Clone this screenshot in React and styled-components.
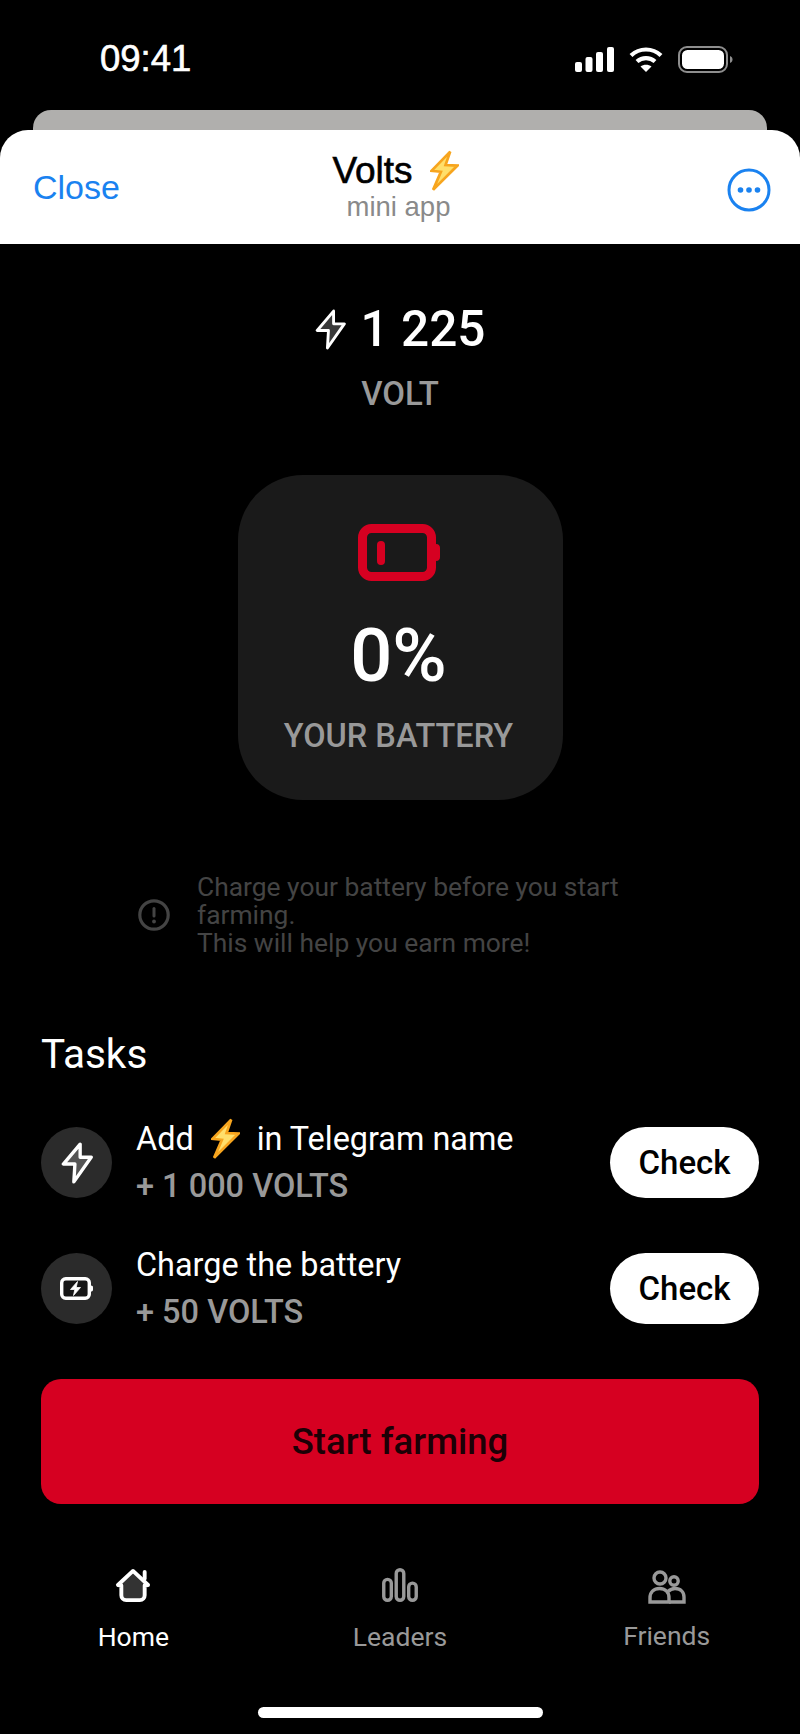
import React from 'react';
import styled, { createGlobalStyle } from 'styled-components';

const GlobalStyle = createGlobalStyle`
  html, body {
    margin: 0;
    padding: 0;
    background: #000;
  }
  * {
    box-sizing: border-box;
  }
`;

const BoltEmoji = ({ size = 28 }) => (
  <EmojiSvg $size={size} viewBox="0 0 28 40">
    <path d="M19.5 1.5 L1.5 20 L10.5 21 L3 38.5 L26.5 15 L15 14.5 Z" fill="#ffdf6b" stroke="#f7a51e" strokeWidth="2.6" strokeLinejoin="miter" />
  </EmojiSvg>
);

const BoltOutline = ({ width, height, fill = 'none', weight = 2.8 }) => (
  <svg width={width} height={height} viewBox="0 0 30 40">
    <path d="M18 2 L2 21 L13 21 L12 38 L28.5 14.5 L18 14.5 Z" fill={fill} stroke="#fff" strokeWidth={weight} strokeLinejoin="round" />
  </svg>
);

const App = () => {
  return (
    <Page>
      <GlobalStyle />
      <StatusBar>
        <Time>09:41</Time>
        <StatusIcons>
          <svg width="39" height="25" viewBox="0 0 39 25" fill="#fff">
            <rect x="0" y="15" width="7" height="10" rx="2" />
            <rect x="10.5" y="10" width="7" height="15" rx="2" />
            <rect x="21" y="5" width="7" height="20" rx="2" />
            <rect x="32" y="0" width="7" height="25" rx="2" />
          </svg>
          <svg width="34" height="25" viewBox="0 0 34 25" fill="none" stroke="#fff" strokeWidth="4.2">
            <path d="M2 8.5 C10.5 0.5 23.5 0.5 32 8.5" />
            <path d="M8 14.5 C13 10 21 10 26 14.5" />
            <path d="M17 25 L11.5 19.5 C14.5 17 19.5 17 22.5 19.5 Z" fill="#fff" stroke="none" />
          </svg>
          <svg width="55" height="27" viewBox="0 0 55 27">
            <rect x="1" y="1" width="48" height="25" rx="8" fill="none" stroke="#8e8e8e" strokeWidth="2" />
            <rect x="4" y="4" width="42" height="19" rx="5.5" fill="#fff" />
            <path d="M52 10 C54 11 54.5 12 54.5 13.5 C54.5 15 54 16 52 17 Z" fill="#8e8e8e" />
          </svg>
        </StatusIcons>
      </StatusBar>

      <BackSheet />
      <Header>
        <CloseLink>Close</CloseLink>
        <HeaderTitle>
          <AppName>
            Volts <BoltEmoji size={29} />
          </AppName>
          <AppSub>mini app</AppSub>
        </HeaderTitle>
        <MoreBtn>
          <svg width="44" height="44" viewBox="0 0 44 44">
            <circle cx="22" cy="22" r="20" fill="none" stroke="#1a82f0" strokeWidth="3" />
            <circle cx="13.5" cy="22" r="2.8" fill="#1a82f0" />
            <circle cx="22" cy="22" r="2.8" fill="#1a82f0" />
            <circle cx="30.5" cy="22" r="2.8" fill="#1a82f0" />
          </svg>
        </MoreBtn>
      </Header>

      <Balance>
        <BalanceRow>
          <BoltOutline width={31} height={41} fill="#3a3a3a" />
          <BalanceValue>1 225</BalanceValue>
        </BalanceRow>
        <BalanceUnit>VOLT</BalanceUnit>
      </Balance>

      <BatteryCard>
        <svg width="82" height="57" viewBox="0 0 82 57">
          <rect x="4.5" y="4.5" width="69" height="48" rx="9" fill="none" stroke="#d60021" strokeWidth="9" />
          <rect x="19" y="17" width="8" height="24" rx="4" fill="#d60021" />
          <path d="M78 20 C81 20 82 22 82 24 L82 33 C82 35 81 37 78 37 Z" fill="#d60021" />
        </svg>
        <BatteryValue>0%</BatteryValue>
        <BatteryLabel>YOUR BATTERY</BatteryLabel>
      </BatteryCard>

      <Notice>
        <svg width="32" height="32" viewBox="0 0 32 32">
          <circle cx="16" cy="16" r="14.2" fill="none" stroke="#444" strokeWidth="3.2" />
          <rect x="14.5" y="8" width="3" height="10.5" rx="1.5" fill="#444" />
          <circle cx="16" cy="22.5" r="1.9" fill="#444" />
        </svg>
        <NoticeText>
          Charge your battery before you start farming.
          <br />
          This will help you earn more!
        </NoticeText>
      </Notice>

      <TasksTitle>Tasks</TasksTitle>
      <TaskList>
        <TaskRow>
          <TaskIcon>
            <BoltOutline width={32} height={42} fill="#555" weight={3.2} />
          </TaskIcon>
          <TaskBody>
            <TaskName>
              Add <BoltEmoji size={29} /> in Telegram name
            </TaskName>
            <TaskReward>+ 1 000 VOLTS</TaskReward>
          </TaskBody>
          <CheckBtn>Check</CheckBtn>
        </TaskRow>
        <TaskRow>
          <TaskIcon>
            <svg width="33" height="23" viewBox="0 0 33 23">
              <rect x="1.7" y="1.7" width="27.6" height="19.6" rx="4" fill="#161616" stroke="#fff" strokeWidth="3.4" />
              <path d="M17.5 4.5 L10.5 12.5 L14.8 12.5 L13.5 18.5 L20.5 10.5 L16.2 10.5 Z" fill="#fff" stroke="#fff" strokeWidth="0.8" strokeLinejoin="round" />
              <path d="M31 8.5 C32.2 8.5 33 9.3 33 10.3 L33 12.7 C33 13.7 32.2 14.5 31 14.5 Z" fill="#fff" />
            </svg>
          </TaskIcon>
          <TaskBody>
            <TaskName>Charge the battery</TaskName>
            <TaskReward>+ 50 VOLTS</TaskReward>
          </TaskBody>
          <CheckBtn>Check</CheckBtn>
        </TaskRow>
      </TaskList>

      <StartBtn>Start farming</StartBtn>

      <TabBar>
        <Tab $active>
          <svg width="38" height="36" viewBox="0 0 38 36">
            <path d="M19 3 L3.5 17.5 L7 18 L7 28 C7 31 9 33 12 33 L26 33 C29 33 31 31 31 28 L31 18 L34.5 17.5 Z" fill="#333" stroke="#fff" strokeWidth="4" strokeLinejoin="round" />
            <rect x="29" y="2" width="4" height="11" rx="2" fill="#fff" />
          </svg>
          <TabLabel>Home</TabLabel>
        </Tab>
        <Tab>
          <svg width="38" height="36" viewBox="0 0 38 36" fill="none" stroke="#999" strokeWidth="3.6">
            <rect x="1.8" y="12" width="8" height="22.2" rx="4" />
            <rect x="15" y="1.8" width="8" height="32.4" rx="4" />
            <rect x="28.2" y="16" width="8" height="18.2" rx="4" />
          </svg>
          <TabLabel $shift={1}>Leaders</TabLabel>
        </Tab>
        <Tab>
          <svg width="38" height="36" viewBox="0 -2 38 36" fill="none" stroke="#999" strokeWidth="3.4">
            <circle cx="12" cy="8" r="6" />
            <circle cx="26" cy="11" r="4.2" />
            <path d="M2 32 L2 28 C2 22 6 18.5 11.5 18.5 C17 18.5 21 22 21 28 L21 32 Z" />
            <path d="M20 21.5 C22 19.5 24.5 18.5 27 18.5 C32.5 18.5 36 22 36 27 L36 32 L21 32" />
          </svg>
          <TabLabel $shift={-2}>Friends</TabLabel>
        </Tab>
      </TabBar>

      <HomeIndicator />
    </Page>
  );
};

const Page = styled.div`
  width: 800px;
  height: 1734px;
  background: #000;
  overflow: hidden;
  font-family: Roboto, "Liberation Sans", sans-serif;
  color: #fff;
`;
const StatusBar = styled.div`
  height: 110px;
  padding: 44px 67px 0 100px;
  display: flex;
  justify-content: space-between;
  align-items: flex-start;
`;
const Time = styled.div`
  font-family: "Liberation Sans", sans-serif;
  font-size: 36.5px;
  line-height: 30px;
  font-weight: 400;
  -webkit-text-stroke: 0.6px #fff;
`;
const StatusIcons = styled.div`
  display: flex;
  align-items: center;
  gap: 15px;
  margin-top: 2px;
`;
const BackSheet = styled.div`
  height: 20px;
  margin: 0 33px;
  background: #b0afad;
  border-radius: 18px 18px 0 0;
`;
const Header = styled.div`
  height: 114px;
  background: #fff;
  border-radius: 28px 28px 0 0;
  padding: 0 29px 0 33px;
  display: grid;
  grid-template-columns: 1fr auto 1fr;
  align-items: center;
  font-family: "Liberation Sans", sans-serif;
`;
const CloseLink = styled.div`
  font-size: 34px;
  color: #1a82f0;
  margin-top: 1px;
`;
const HeaderTitle = styled.div`
  display: flex;
  flex-direction: column;
  align-items: center;
  margin-top: -2px;
  margin-right: 7px;
`;
const AppName = styled.div`
  font-size: 37px;
  line-height: 40px;
  color: #000;
  -webkit-text-stroke: 0.6px #000;
  display: flex;
  align-items: center;
  gap: 17px;
  margin-left: -6px;
`;
const EmojiSvg = styled.svg`
  display: inline-block;
  width: ${(p) => p.$size}px;
  height: ${(p) => p.$size * 1.43}px;
  flex: none;
`;
const AppSub = styled.div`
  font-size: 27.5px;
  line-height: 30px;
  color: #8a8a8a;
`;
const MoreBtn = styled.div`
  display: flex;
  justify-content: flex-end;
  margin-top: 5px;
`;
const Balance = styled.div`
  margin-top: 60px;
  display: flex;
  flex-direction: column;
  align-items: center;
`;
const BalanceRow = styled.div`
  display: flex;
  align-items: center;
  gap: 15px;
  height: 50px;
`;
const BalanceValue = styled.div`
  font-size: 49.5px;
  font-weight: 500;
  line-height: 50px;
`;
const BalanceUnit = styled.div`
  margin-top: 22px;
  font-size: 33px;
  line-height: 36px;
  font-weight: 500;
  color: #999;
`;
const BatteryCard = styled.div`
  width: 325px;
  height: 325px;
  margin: 63px auto 0;
  background: #1a1a1a;
  border-radius: 65px;
  padding: 49px 3px 0 0;
  display: flex;
  flex-direction: column;
  align-items: center;
`;
const BatteryValue = styled.div`
  margin-top: 33px;
  font-size: 74px;
  line-height: 84px;
  font-weight: 500;
`;
const BatteryLabel = styled.div`
  margin-top: 19px;
  font-size: 32.5px;
  line-height: 38px;
  font-weight: 500;
  color: #999;
`;
const Notice = styled.div`
  margin: 73px 0 0 138px;
  width: 500px;
  display: flex;
  align-items: center;
  gap: 27px;
`;
const NoticeText = styled.div`
  font-size: 26.4px;
  line-height: 28px;
  color: #444;
  width: 440px;
`;
const TasksTitle = styled.div`
  margin: 75px 0 0 41px;
  font-size: 40.5px;
  line-height: 44px;
`;
const TaskList = styled.div`
  margin-top: 51px;
  padding: 0 41px;
  display: flex;
  flex-direction: column;
  gap: 55px;
`;
const TaskRow = styled.div`
  display: flex;
  align-items: center;
  gap: 24px;
  height: 71px;
`;
const TaskIcon = styled.div`
  width: 71px;
  height: 71px;
  border-radius: 50%;
  background: #2b2b2b;
  display: flex;
  align-items: center;
  justify-content: center;
  flex: none;
`;
const TaskBody = styled.div`
  flex: 1;
  display: flex;
  flex-direction: column;
  gap: 10px;
`;
const TaskName = styled.div`
  font-size: 32.4px;
  line-height: 37px;
  display: flex;
  align-items: center;
  gap: 17px;
  height: 37px;
`;
const TaskReward = styled.div`
  font-size: 32.5px;
  line-height: 37px;
  font-weight: 500;
  color: #999;
`;
const CheckBtn = styled.button`
  width: 149px;
  height: 71px;
  border: none;
  border-radius: 36px;
  background: #fff;
  color: #000;
  font-family: inherit;
  font-size: 33px;
  font-weight: 500;
  padding: 0;
`;
const StartBtn = styled.button`
  display: block;
  width: 718px;
  height: 125px;
  margin: 55px auto 0;
  border: none;
  border-radius: 20px;
  background: #d60021;
  color: #1c0006;
  font-family: inherit;
  font-size: 36.5px;
  font-weight: 500;
  padding-bottom: 2px;
`;
const TabBar = styled.div`
  margin-top: 64px;
  display: grid;
  grid-template-columns: repeat(3, 1fr);
`;
const Tab = styled.div`
  display: flex;
  flex-direction: column;
  align-items: center;
  height: 84px;
  color: ${(p) => (p.$active ? '#fff' : '#999')};
`;
const TabLabel = styled.div`
  margin-top: ${(p) => 19 + (p.$shift || 0)}px;
  font-size: 26.5px;
  line-height: 30px;
`;
const HomeIndicator = styled.div`
  width: 285px;
  height: 11px;
  margin: 55px auto 0;
  border-radius: 6px;
  background: #fff;
`;

export default App;
